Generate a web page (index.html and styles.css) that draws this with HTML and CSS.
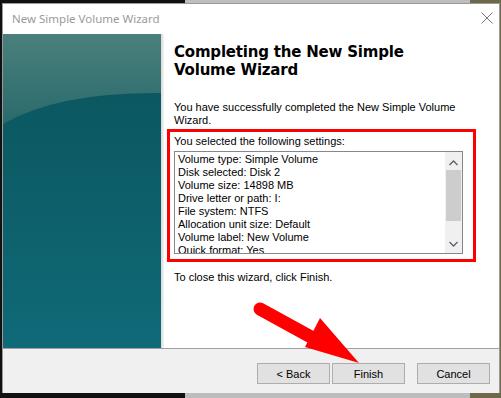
FILE: index.html
```html
<!DOCTYPE html>
<html>
<head>
<meta charset="utf-8">
<link rel="stylesheet" href="styles.css">
</head>
<body>
<div class="window">
  <div class="titlebar">
    <span class="title">New Simple Volume Wizard</span>
    <svg class="close" width="12" height="12" viewBox="0 0 12 12"><path d="M0.5 0.5 L11.5 11.5 M11.5 0.5 L0.5 11.5" stroke="#7a7a7a" stroke-width="1" fill="none"/></svg>
  </div>
  <div class="main">
    <div class="side">
      <svg width="158" height="314" viewBox="0 0 158 314" preserveAspectRatio="none">
        <defs>
          <linearGradient id="lo" x1="0" y1="0" x2="0" y2="1">
            <stop offset="0" stop-color="#0a545c"/>
            <stop offset="0.4" stop-color="#0c5c66"/>
            <stop offset="1" stop-color="#106a78"/>
          </linearGradient>
          <linearGradient id="hi" x1="0" y1="0" x2="0" y2="1">
            <stop offset="0" stop-color="#4a807c"/>
            <stop offset="1" stop-color="#2a6a6c"/>
          </linearGradient>
        </defs>
        <rect width="158" height="314" fill="url(#lo)"/>
        <path d="M0 90 Q55 58 158 59 L158 0 L0 0 Z" fill="url(#hi)"/>
      </svg>
    </div>
    <div class="shadow"></div>
    <div class="content">
      <h1 class="heading">Completing the New Simple Volume Wizard</h1>
      <p class="intro">You have successfully completed the New Simple Volume Wizard.</p>
      <div class="highlight">
        <div class="label">You selected the following settings:</div>
        <div class="listbox">
          <div class="items">
            <div>Volume type: Simple Volume</div>
            <div>Disk selected: Disk 2</div>
            <div>Volume size: 14898 MB</div>
            <div>Drive letter or path: I:</div>
            <div>File system: NTFS</div>
            <div>Allocation unit size: Default</div>
            <div>Volume label: New Volume</div>
            <div>Quick format: Yes</div>
          </div>
          <div class="scrollbar">
            <svg class="arrow" width="9" height="6" viewBox="0 0 9 6"><path d="M0.5 5 L4.5 1 L8.5 5" stroke="#606060" stroke-width="1.3" fill="none"/></svg>
            <div class="thumb"></div>
            <svg class="arrow down" width="9" height="6" viewBox="0 0 9 6"><path d="M0.5 1 L4.5 5 L8.5 1" stroke="#606060" stroke-width="1.3" fill="none"/></svg>
          </div>
        </div>
      </div>
      <p class="closing">To close this wizard, click Finish.</p>
    </div>
  </div>
  <div class="footer">
    <button class="btn">&lt; Back</button>
    <button class="btn">Finish</button>
    <button class="btn cancel">Cancel</button>
  </div>
  <svg class="redarrow" width="120" height="80" viewBox="0 0 120 80">
    <line x1="9" y1="10" x2="60" y2="38" stroke="#ff0000" stroke-width="13" stroke-linecap="round"/>
    <polygon points="69,19 108,64 54,48" fill="#ff0000"/>
  </svg>
</div>
</body>
</html>
```

FILE: styles.css
```css
html, body {
  margin: 0;
  padding: 0;
}
body {
  width: 501px;
  height: 398px;
  overflow: hidden;
  background: linear-gradient(to right, #111 0, #111 185px, #bdbdbd 185px, #bdbdbd 470px, #6d6a4c 470px);
}
.window {
  position: relative;
  box-sizing: border-box;
  margin: 3px 0 0 2px;
  width: 498px;
  height: 390px;
  border: 1px solid #9a9a9a;
  border-bottom: none;
  background: #ffffff;
  font-family: "Liberation Sans", Arial, sans-serif;
  font-size: 11px;
  color: #000;
}
.titlebar {
  height: 30px;
  display: flex;
  align-items: center;
  justify-content: space-between;
  padding: 0 6px 0 9px;
  background: #fff;
}
.title {
  font-family: "Noto Sans", sans-serif;
  font-size: 11.5px;
  color: #9a9a9a;
  margin-top: -1px;
}
.close {
  margin-top: -2px;
}
.main {
  display: flex;
  height: 314px;
}
.side {
  width: 158px;
  height: 314px;
}
.side svg {
  display: block;
}
.shadow {
  width: 3px;
  background: linear-gradient(to right, #d8d8d8, #f4f4f4);
}
.content {
  flex: 1;
  padding: 9px 0 0 10px;
}
.heading {
  margin: 0;
  font-family: "DejaVu Sans", Verdana, sans-serif;
  font-weight: bold;
  font-size: 15px;
  line-height: 18px;
  width: 240px;
  letter-spacing: -0.2px;
}
.intro {
  margin: 22px 0 0 0;
  line-height: 13px;
  width: 290px;
}
.highlight {
  box-sizing: border-box;
  margin: 2px 0 0 -7px;
  width: 309px;
  height: 133px;
  border: 3px solid #ff0000;
  padding: 3px 0 0 4px;
}
.label {
  line-height: 13px;
}
.listbox {
  box-sizing: border-box;
  margin-top: 3px;
  width: 289px;
  height: 103px;
  border: 1px solid #828790;
  display: flex;
  overflow: hidden;
}
.items {
  flex: 1;
  padding: 1px 0 0 3px;
  line-height: 13px;
}
.scrollbar {
  width: 17px;
  background: #f0f0f0;
  display: flex;
  flex-direction: column;
  align-items: center;
}
.arrow {
  margin-top: 8px;
  flex: none;
}
.arrow.down {
  margin-top: auto;
  margin-bottom: 6px;
}
.thumb {
  margin-top: 4px;
  width: 15px;
  height: 51px;
  background: #cdcdcd;
}
.closing {
  margin: 9px 0 0 0;
  line-height: 13px;
}
.footer {
  box-sizing: border-box;
  height: 45px;
  border-top: 1px solid #a0a0a0;
  background: #f0f0f0;
  display: flex;
  justify-content: flex-end;
  align-items: flex-start;
  padding: 14px 9px 0 0;
}
.btn {
  width: 73px;
  height: 21px;
  margin: 0 0 0 2px;
  padding: 0;
  border: 1px solid #adadad;
  background: #e1e1e1;
  font-family: "Liberation Sans", Arial, sans-serif;
  font-size: 11px;
  color: #000;
}
.btn.cancel {
  margin-left: 12px;
}
.redarrow {
  position: absolute;
  left: 248px;
  top: 295px;
}
```
